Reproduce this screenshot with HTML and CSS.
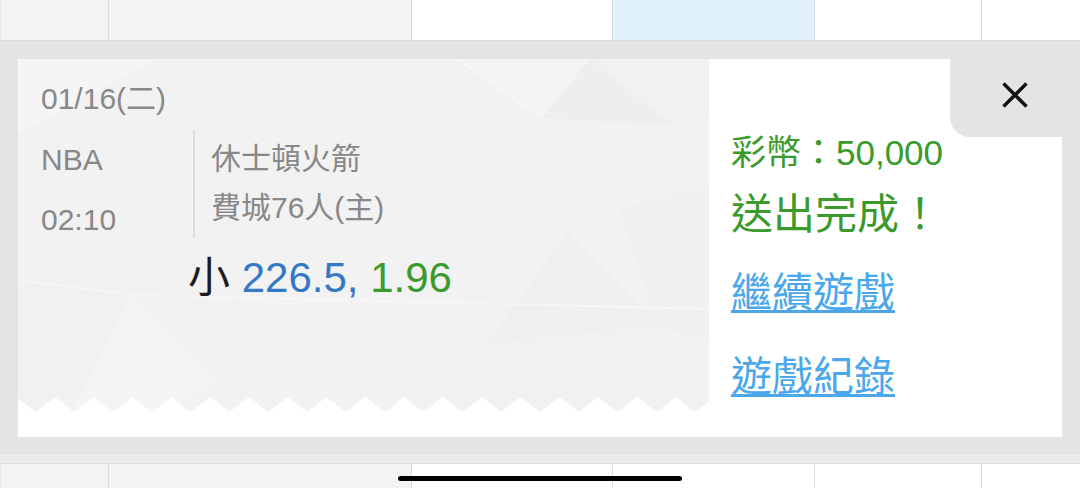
FILE: index.html
```html
<!DOCTYPE html>
<html lang="zh-Hant">
<head>
<meta charset="utf-8">
<title>送出完成</title>
<link rel="stylesheet" href="styles.css">
</head>
<body>
<div class="table-row top-row">
  <div class="cell c1 shaded"></div>
  <div class="cell c2 shaded"></div>
  <div class="cell c3"></div>
  <div class="cell c4 selected"></div>
  <div class="cell c5"></div>
  <div class="cell c6"></div>
</div>
<div class="panel">
  <div class="card">
    <div class="ticket">
      <div class="date">01/16(二)</div>
      <div class="info">
        <div class="meta">
          <div>NBA</div>
          <div>02:10</div>
        </div>
        <div class="teams">
          <div>休士頓火箭</div>
          <div>費城76人(主)</div>
        </div>
      </div>
      <div class="bet"><span class="pick">小</span> <span class="line">226.5,</span> <span class="odds">1.96</span></div>
    </div>
    <div class="result">
      <div class="coins">彩幣：50,000</div>
      <div class="done">送出完成！</div>
      <a class="link first" href="#">繼續遊戲</a>
      <a class="link second" href="#">遊戲紀錄</a>
    </div>
    <button class="close" aria-label="關閉">
      <svg width="26" height="26" viewBox="0 0 26 26"><path d="M1.5 1.5 L24.5 24.5 M24.5 1.5 L1.5 24.5" stroke="#111" stroke-width="3.4" fill="none"/></svg>
    </button>
  </div>
</div>
<div class="band"></div>
<div class="table-row bottom-row">
  <div class="cell c1 shaded"></div>
  <div class="cell c2 shaded"></div>
  <div class="cell c3"></div>
  <div class="cell c4"></div>
  <div class="cell c5"></div>
  <div class="cell c6"></div>
</div>
<div class="home-indicator"></div>
</body>
</html>
```

FILE: styles.css
```css
html, body {
  margin: 0;
  padding: 0;
}
body {
  width: 1080px;
  height: 488px;
  overflow: hidden;
  position: relative;
  background: #ffffff;
  font-family: "Liberation Sans", "Noto Sans CJK TC", sans-serif;
}

.table-row {
  display: flex;
  box-sizing: border-box;
}
.top-row {
  height: 41px;
  border-bottom: 1px solid #d6dde3;
}
.bottom-row {
  height: 25px;
  border-top: 1px solid #d6dde3;
}
.cell {
  box-sizing: border-box;
  border-right: 1px solid #d6dde3;
  background: #ffffff;
}
.cell.shaded { background: #f3f3f3; }
.cell.selected { background: #e1f1fb; }
.c1 { width: 109px; border-left: 1px solid #e6e9ec; }
.c2 { width: 303px; }
.c3 { width: 201px; }
.c4 { width: 202px; }
.c5 { width: 167px; }
.c6 { flex: 1; border-right: none; }

.panel {
  background: #e4e4e4;
  padding: 18px;
  height: 414px;
  box-sizing: border-box;
}
.band {
  height: 8px;
  background: #ebebeb;
}

.card {
  position: relative;
  display: flex;
  height: 378px;
  background: #ffffff;
}

.ticket {
  width: 691px;
  box-sizing: border-box;
  padding: 22px 0 0 23px;
  color: #888888;
  font-size: 30px;
  background: #ffffff url("data:image/svg+xml;utf8,<svg xmlns='http://www.w3.org/2000/svg' width='691' height='353' viewBox='0 0 691 353'><defs><pattern id='z' x='17.6' y='338' width='38.8' height='15' patternUnits='userSpaceOnUse'><path d='M0 15 L19.4 0 L38.8 15 Z' fill='white'/></pattern></defs><rect width='691' height='353' fill='%23f2f2f2'/><polygon points='0,0 140,0 0,75' fill='%23f5f5f5'/><polygon points='439,0 572,0 524,59 517,56' fill='%23f4f4f4'/><polygon points='524,59 572,0 654,66' fill='%23eeeeee'/><polygon points='654,66 572,0 691,0 691,60' fill='%23f1f1f1'/><polygon points='600,150 691,125 691,280 640,270' fill='%23f0f0f0'/><polygon points='549,173 470,284 642,266' fill='%23efefef'/><polygon points='0,221 115,236 55,353 0,353' fill='%23f1f1f1'/><polygon points='115,236 200,320 150,353 55,353' fill='%23f4f4f4'/><polygon points='470,284 642,266 691,353 430,353' fill='%23f1f1f1'/><polyline points='0,221 115,236 691,250' fill='none' stroke='%23f6f6f6' stroke-width='2'/><line x1='115' y1='236' x2='55' y2='353' stroke='%23f6f6f6' stroke-width='2'/><line x1='439' y1='0' x2='524' y2='59' stroke='%23f7f7f7' stroke-width='2'/><rect y='338' width='691' height='15' fill='url(%23z)'/></svg>") no-repeat 0 0 / 691px 353px;
}
.date {
  line-height: 36px;
}
.info {
  display: flex;
  align-items: flex-start;
  margin-top: 13px;
}
.meta {
  width: 152px;
  line-height: 60px;
}
.teams {
  border-left: 2px solid #dcdcdc;
  padding: 4px 0 6px 16px;
  line-height: 49px;
}
.bet {
  margin-top: 4px;
  padding-left: 147px;
  font-size: 42px;
  line-height: 48px;
}
.pick { color: #1c1c1c; }
.line { color: #3479c6; }
.odds { color: #3a9a2c; }

.result {
  flex: 1;
  padding: 74px 0 0 22px;
  display: flex;
  flex-direction: column;
  align-items: flex-start;
}
.coins {
  color: #3a9a2c;
  font-size: 35px;
  line-height: 40px;
}
.done {
  color: #3a9a2c;
  font-size: 42px;
  line-height: 48px;
  margin-top: 18px;
}
.link {
  color: #4aa7ec;
  font-size: 41px;
  line-height: 48px;
  text-decoration: underline;
  text-decoration-thickness: 3px;
  text-underline-offset: 3px;
}
.link.first { margin-top: 30px; }
.link.second { margin-top: 36px; }

.close {
  position: absolute;
  top: 0;
  right: 0;
  width: 112px;
  height: 78px;
  box-sizing: border-box;
  margin: 0;
  border: none;
  background: #e4e4e4;
  border-bottom-left-radius: 20px;
  padding: 23px 34px 0 0;
  display: flex;
  justify-content: flex-end;
  align-items: flex-start;
}
.close svg { display: block; }

.home-indicator {
  position: absolute;
  left: 398px;
  top: 476px;
  width: 284px;
  height: 5px;
  border-radius: 3px;
  background: #000000;
}
```
